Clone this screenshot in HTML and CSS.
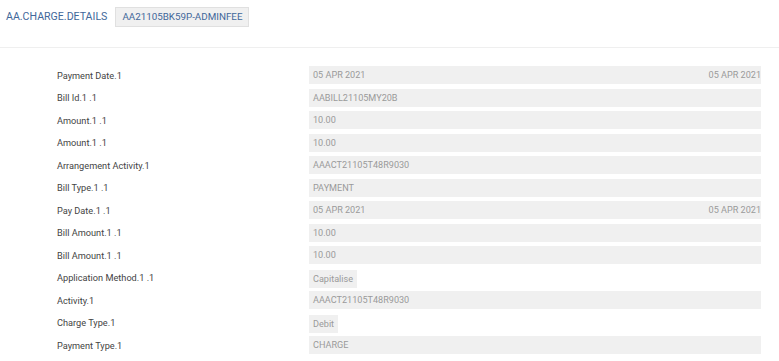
FILE: index.html
```html
<!DOCTYPE html>
<html>
<head>
    <meta charset="utf-8">
    <title>AA.CHARGE.DETAILS</title>
    <link rel="stylesheet" href="styles.css">
</head>
<body>
<div class="head">
    <span class="title">AA.CHARGE.DETAILS</span>
    <span class="tag">AA21105BK59P-ADMINFEE</span>
</div>
<div class="rows">
    <div class="row"><span class="label">Payment Date.1</span><span class="val split"><span>05 APR 2021</span><span>05 APR 2021</span></span></div>
    <div class="row"><span class="label">Bill Id.1 .1</span><span class="val">AABILL21105MY20B</span></div>
    <div class="row"><span class="label">Amount.1 .1</span><span class="val">10.00</span></div>
    <div class="row"><span class="label">Amount.1 .1</span><span class="val">10.00</span></div>
    <div class="row"><span class="label">Arrangement Activity.1</span><span class="val">AAACT21105T48R9030</span></div>
    <div class="row"><span class="label">Bill Type.1 .1</span><span class="val">PAYMENT</span></div>
    <div class="row"><span class="label">Pay Date.1 .1</span><span class="val split"><span>05 APR 2021</span><span>05 APR 2021</span></span></div>
    <div class="row"><span class="label">Bill Amount.1 .1</span><span class="val">10.00</span></div>
    <div class="row"><span class="label">Bill Amount.1 .1</span><span class="val">10.00</span></div>
    <div class="row"><span class="label">Application Method.1 .1</span><span><span class="val short">Capitalise</span></span></div>
    <div class="row"><span class="label">Activity.1</span><span class="val">AAACT21105T48R9030</span></div>
    <div class="row"><span class="label">Charge Type.1</span><span><span class="val short">Debit</span></span></div>
    <div class="row"><span class="label">Payment Type.1</span><span class="val">CHARGE</span></div>
</div>
</body>
</html>
```

FILE: styles.css
```css
body {
    margin: 0;
    font-family: Roboto, "Liberation Sans", sans-serif;
    background: #fff;
}

.head {
    display: flex;
    align-items: center;
    gap: 8px;
    height: 48px;
    padding-left: 6px;
    padding-bottom: 14px;
    border-bottom: 1px solid #efefef;
    box-sizing: border-box;
}

.title {
    font-size: 10.6px;
    color: #41679a;
}

.tag {
    font-size: 9.8px;
    color: #41679a;
    background: #f0f0f0;
    border: 1px solid #e0e0e0;
    padding: 3px 6px;
    line-height: 12px;
}

.rows {
    padding: 16px 0 0 57px;
}

.row {
    display: grid;
    grid-template-columns: 252px 452px;
    align-items: center;
    height: 22.5px;
}

.label {
    font-size: 9.2px;
    color: #444;
}

.val {
    display: block;
    background: #f0f0f0;
    color: #9a9a9a;
    font-size: 9.1px;
    line-height: 18px;
    padding: 0 4px;
}

.val.short {
    display: inline-block;
}

.split {
    display: flex;
    justify-content: space-between;
    padding-right: 0;
}
```
